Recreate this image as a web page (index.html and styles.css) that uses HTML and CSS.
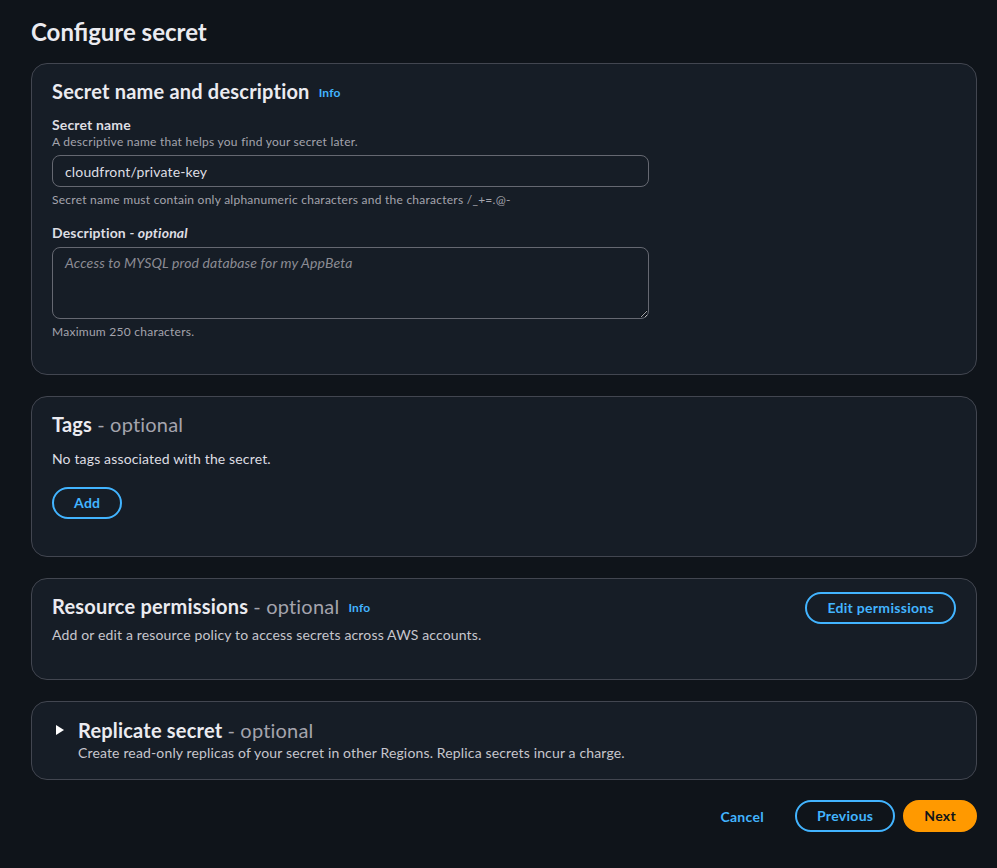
FILE: index.html
```html
<!DOCTYPE html>
<html lang="en">
<head>
    <meta charset="UTF-8">
    <meta name="viewport" content="width=device-width, initial-scale=1.0">
    <title>Configure secret</title>
    <link rel="stylesheet" href="styles.css">
</head>
<body>
    <div class="page">
        <h1 class="page-title">Configure secret</h1>

        <div class="card card-name">
            <h2 class="card-title">Secret name and description <a class="info" href="#">Info</a></h2>

            <div class="field">
                <label class="field-label" for="secretName">Secret name</label>
                <div class="field-desc">A descriptive name that helps you find your secret later.</div>
                <input type="text" id="secretName" class="input" value="cloudfront/private-key">
                <div class="field-hint">Secret name must contain only alphanumeric characters and the characters /_+=.@-</div>
            </div>

            <div class="field field-desc-block">
                <label class="field-label" for="secretDesc">Description <i>- optional</i></label>
                <textarea id="secretDesc" class="textarea" placeholder="Access to MYSQL prod database for my AppBeta"></textarea>
                <div class="field-hint">Maximum 250 characters.</div>
            </div>
        </div>

        <div class="card card-tags">
            <h2 class="card-title">Tags <span class="optional">- optional</span></h2>
            <p class="card-text">No tags associated with the secret.</p>
            <button class="btn btn-normal btn-add">Add</button>
        </div>

        <div class="card card-perms">
            <div class="card-head">
                <div>
                    <h2 class="card-title">Resource permissions <span class="optional">- optional</span> <a class="info" href="#">Info</a></h2>
                    <p class="card-desc">Add or edit a resource policy to access secrets across AWS accounts.</p>
                </div>
                <button class="btn btn-normal">Edit permissions</button>
            </div>
        </div>

        <div class="card card-replicate">
            <div class="expander">
                <svg class="caret" width="10" height="12" viewBox="0 0 10 12"><path d="M1 1 L9 6 L1 11 Z" fill="#ffffff"/></svg>
                <div>
                    <h2 class="card-title">Replicate secret <span class="optional">- optional</span></h2>
                    <p class="card-desc">Create read-only replicas of your secret in other Regions. Replica secrets incur a charge.</p>
                </div>
            </div>
        </div>

        <div class="actions">
            <a class="btn-link" href="#">Cancel</a>
            <button class="btn btn-normal">Previous</button>
            <button class="btn btn-primary">Next</button>
        </div>
    </div>
</body>
</html>
```

FILE: styles.css
```css
body {
    margin: 0;
    background-color: #0f141a;
    color: #dedee3;
    font-family: Lato, "Open Sans", Arial, sans-serif;
    font-size: 14px;
    letter-spacing: 0.15px;
}

.page {
    width: 946px;
    padding: 16px 20px 30px 31px;
    display: flex;
    flex-direction: column;
}

.page-title {
    margin: 0 0 15px 0;
    font-size: 24px;
    line-height: 32px;
    font-weight: 700;
    color: #ebebf0;
    letter-spacing: 0;
}

.card {
    background-color: #161d26;
    border: 1px solid #424650;
    border-radius: 16px;
    padding: 14px 20px 20px 20px;
    margin-bottom: 21px;
}

.card-title {
    margin: 0;
    font-size: 20px;
    line-height: 26px;
    font-weight: 700;
    color: #ebebf0;
    letter-spacing: 0.2px;
}

.optional {
    font-weight: 400;
    color: #a4a4ad;
}

.info {
    font-size: 12px;
    font-weight: 700;
    color: #42b4ff;
    text-decoration: none;
    margin-left: 4px;
    vertical-align: 2px;
}

.field {
    display: flex;
    flex-direction: column;
    margin-top: 10px;
}

.field-desc-block {
    margin-top: 16px;
}

.field-label {
    font-size: 14px;
    line-height: 18px;
    font-weight: 700;
    color: #dedee3;
}

.field-label i {
    font-weight: 700;
}

.field-desc,
.field-hint {
    font-size: 12px;
    line-height: 16px;
    color: #a4a4ad;
    letter-spacing: 0.25px;
}

.field-hint {
    margin-top: 5px;
}

.input,
.textarea {
    width: 597px;
    box-sizing: border-box;
    background-color: transparent;
    border: 1px solid #656871;
    border-radius: 8px;
    color: #dedee3;
    font-family: inherit;
    font-size: 14px;
    letter-spacing: 0.15px;
}

.input {
    height: 32px;
    padding: 0 12px;
    margin-top: 5px;
}

.textarea {
    height: 72px;
    padding: 6px 12px;
    margin-top: 5px;
    resize: vertical;
}

.textarea::placeholder {
    color: #8c8c94;
    font-style: italic;
}

.card-name {
    height: 276px;
}

.card-tags {
    height: 125px;
    display: flex;
    flex-direction: column;
}

.card-text {
    margin: 13px 0 0 0;
    line-height: 18px;
    color: #dedee3;
}

.card-desc {
    margin: 4px 0 0 0;
    line-height: 20px;
    color: #c6c6cd;
}

.btn {
    font-family: inherit;
    font-size: 14px;
    font-weight: 700;
    line-height: 18px;
    letter-spacing: 0.3px;
    border-radius: 20px;
    padding: 5px 20px;
    cursor: pointer;
}

.btn-normal {
    background-color: transparent;
    border: 2px solid #42b4ff;
    color: #42b4ff;
}

.btn-primary {
    background-color: #ff9900;
    border: 2px solid #ff9900;
    color: #0f141a;
    padding: 5px 19px;
}

.btn-add {
    align-self: flex-start;
    margin-top: 19px;
}

.card-perms {
    height: 66px;
}

.card-head {
    display: flex;
    justify-content: space-between;
    align-items: flex-start;
}

.card-head .btn {
    margin-top: -1px;
}

.card-replicate {
    padding: 15px 20px 16px 20px;
}

.expander {
    display: flex;
    gap: 13px;
}

.caret {
    margin-top: 7px;
    margin-left: 3px;
}

.expander .card-desc {
    margin-top: 0;
}

.actions {
    display: flex;
    justify-content: flex-end;
    align-items: center;
    gap: 8px;
    margin-top: -1px;
}

.btn-link {
    font-size: 14px;
    font-weight: 700;
    letter-spacing: 0.3px;
    color: #42b4ff;
    text-decoration: none;
    padding: 0 23px 0 20px;
}
```
